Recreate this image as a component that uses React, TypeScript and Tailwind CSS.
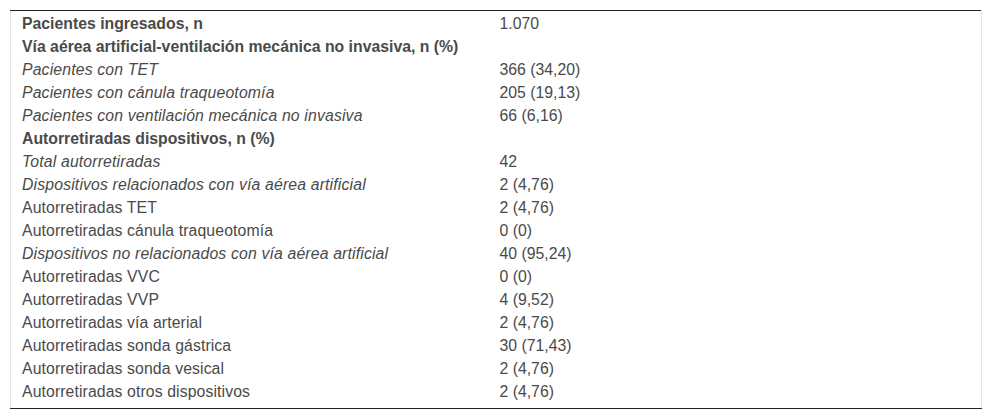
const rows: { label: string; value: string; kind: "bold" | "italic" | "plain" }[] = [
  { label: "Pacientes ingresados, n", value: "1.070", kind: "bold" },
  { label: "Vía aérea artificial-ventilación mecánica no invasiva, n (%)", value: "", kind: "bold" },
  { label: "Pacientes con TET", value: "366 (34,20)", kind: "italic" },
  { label: "Pacientes con cánula traqueotomía", value: "205 (19,13)", kind: "italic" },
  { label: "Pacientes con ventilación mecánica no invasiva", value: "66 (6,16)", kind: "italic" },
  { label: "Autorretiradas dispositivos, n (%)", value: "", kind: "bold" },
  { label: "Total autorretiradas", value: "42", kind: "italic" },
  { label: "Dispositivos relacionados con vía aérea artificial", value: "2 (4,76)", kind: "italic" },
  { label: "Autorretiradas TET", value: "2 (4,76)", kind: "plain" },
  { label: "Autorretiradas cánula traqueotomía", value: "0 (0)", kind: "plain" },
  { label: "Dispositivos no relacionados con vía aérea artificial", value: "40 (95,24)", kind: "italic" },
  { label: "Autorretiradas VVC", value: "0 (0)", kind: "plain" },
  { label: "Autorretiradas VVP", value: "4 (9,52)", kind: "plain" },
  { label: "Autorretiradas vía arterial", value: "2 (4,76)", kind: "plain" },
  { label: "Autorretiradas sonda gástrica", value: "30 (71,43)", kind: "plain" },
  { label: "Autorretiradas sonda vesical", value: "2 (4,76)", kind: "plain" },
  { label: "Autorretiradas otros dispositivos", value: "2 (4,76)", kind: "plain" },
];

export default function App() {
  return (
    <div className="bg-white w-[992px] h-[420px] pt-[10px] pl-[10px] font-['Liberation_Sans',Arial,sans-serif] text-[15.8px] text-[#4a4a4a]">
      <table className="w-[972px] border-collapse border-x border-x-[#e5e5e5] border-t border-t-[#222] border-b border-b-[#222]">
        <tbody>
          <tr className="h-[1px]">
            <td />
            <td />
          </tr>
          {rows.map((r) => (
            <tr key={r.label} className="h-[23px]">
              <td
                className={
                  "w-[477px] pl-[11px] pr-2 leading-[23px] align-middle " +
                  (r.kind === "bold"
                    ? "font-bold"
                    : r.kind === "italic"
                      ? "italic tracking-[0.15px]"
                      : "tracking-[0.1px]")
                }
              >
                {r.label}
              </td>
              <td className="pl-[12px] pr-2 leading-[23px] align-middle">{r.value}</td>
            </tr>
          ))}
          <tr className="h-[6px]">
            <td />
            <td />
          </tr>
        </tbody>
      </table>
    </div>
  );
}
